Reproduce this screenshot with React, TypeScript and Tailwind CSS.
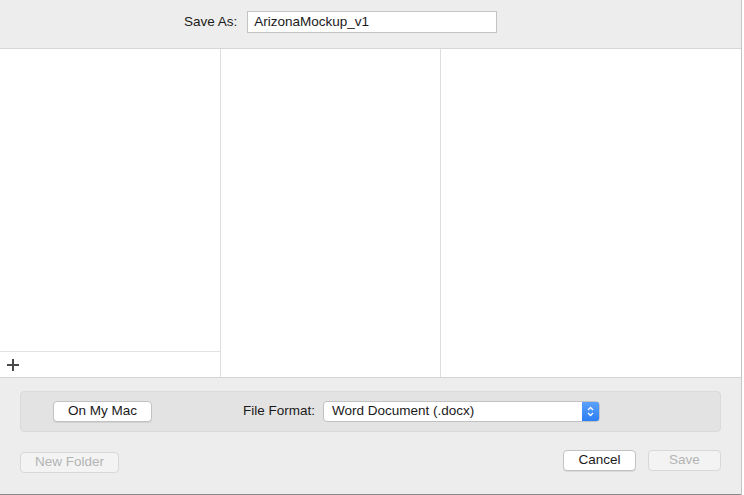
import React from "react";

export default function App() {
  const font = { fontFamily: '"Liberation Sans", Arial, sans-serif' };
  return (
    <div className="w-[744px] h-[495px] flex bg-white overflow-hidden text-[13.5px] text-[#1a1a1a]" style={font}>
      <div className="w-[742px] h-full flex flex-col border-r border-[#c4c4c4]">
        {/* top bar */}
        <div className="h-[49px] shrink-0 bg-[#ededed] border-b border-[#d6d6d6] flex items-center pl-[184px] pb-[4px]">
          <span className="mr-[10px]">Save As:</span>
          <div className="w-[250px] h-[22px] bg-white border border-[#c3c3c3] flex items-center pl-[6px]">
            ArizonaMockup_v1
          </div>
        </div>
        {/* columns */}
        <div className="h-[328px] shrink-0 flex bg-white">
          <div className="w-[221px] border-r border-[#dedede] flex flex-col">
            <div className="flex-1" />
            <div className="h-[26px] border-t border-[#e2e2e2] flex items-center pl-[6px]">
              <svg width="14" height="14" viewBox="0 0 14 14">
                <rect x="6" y="1" width="2" height="12" fill="#4a4a4a" />
                <rect x="1" y="6" width="12" height="2" fill="#4a4a4a" />
              </svg>
            </div>
          </div>
          <div className="w-[220px] border-r border-[#dedede]" />
          <div className="flex-1" />
        </div>
        {/* bottom */}
        <div className="flex-1 bg-[#ededed] border-t border-[#d4d4d4] flex flex-col px-[20px] pt-[13px]">
          <div className="h-[41px] bg-[#e3e3e3] border border-[#dadada] rounded-[4px] flex items-center pl-[32px]">
            <button className="w-[99px] h-[21px] bg-white border border-[#c2c2c2] rounded-[4px] shadow-[0_1px_0_rgba(0,0,0,0.08)] flex items-center justify-center">
              On My Mac
            </button>
            <span className="ml-[91px] mr-[8px]">File Format:</span>
            <div className="w-[277px] h-[21px] bg-white border border-[#c2c2c2] rounded-[4px] flex items-center overflow-hidden">
              <span className="flex-1 pl-[8px]">Word Document (.docx)</span>
              <div className="w-[17px] h-full bg-[#3b8af7] bg-gradient-to-b from-[#5aa1fb] to-[#2b7ef5] flex items-center justify-center">
                <svg width="9" height="13" viewBox="0 0 9 13">
                  <path d="M2 5 L4.5 2.5 L7 5" stroke="white" strokeWidth="1.3" fill="none" />
                  <path d="M2 8 L4.5 10.5 L7 8" stroke="white" strokeWidth="1.3" fill="none" />
                </svg>
              </div>
            </div>
          </div>
          <div className="flex items-start justify-between mt-[18px]">
            <button className="mt-[2px] w-[99px] h-[21px] bg-[#f3f3f3] border border-[#d8d8d8] rounded-[4px] text-[#b3b3b3] flex items-center justify-center">
              New Folder
            </button>
            <div className="flex gap-[12px]">
              <button className="w-[73px] h-[21px] bg-white border border-[#c2c2c2] rounded-[4px] shadow-[0_1px_0_rgba(0,0,0,0.08)] flex items-center justify-center">
                Cancel
              </button>
              <button className="w-[73px] h-[21px] bg-[#f3f3f3] border border-[#d8d8d8] rounded-[4px] text-[#b3b3b3] flex items-center justify-center">
                Save
              </button>
            </div>
          </div>
        </div>
        <div className="h-[1px] bg-[#8a8a8a] shrink-0" />
      </div>
      <div className="flex-1 bg-white" />
    </div>
  );
}
